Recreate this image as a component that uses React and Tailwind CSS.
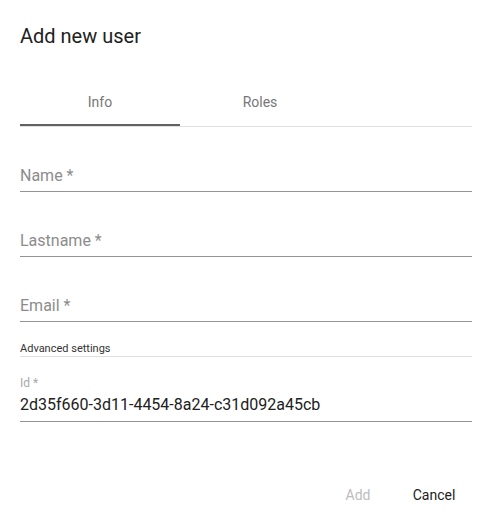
import React from "react";

function Field({ label }) {
  return (
    <div className="mt-[32px] h-[33px] pt-[2px] border-b border-[#949494] flex items-center">
      <span className="text-[16px] leading-[24px] text-[#8c8c8c]">{label}</span>
    </div>
  );
}

export default function App() {
  return (
    <div
      className="w-[491px] h-[528px] bg-white overflow-hidden"
      style={{ fontFamily: "Roboto, 'Liberation Sans', sans-serif" }}
    >
      <div className="pl-[20px] pr-[19px]">
        <h2 className="pt-[20px] text-[20px] leading-[32px] font-normal text-[#212121]">
          Add new user
        </h2>
        <div className="mt-[26px] flex border-b border-[#e0e0e0]">
          <div className="w-[160px] h-[48px] flex flex-col">
            <div className="flex-1 pt-[2px] flex items-center justify-center text-[14px] font-normal text-[#777]">
              Info
            </div>
            <div className="h-[2px] bg-[#616161]" />
          </div>
          <div className="w-[160px] h-[48px] flex items-center justify-center text-[14px] font-normal text-[#777]">
            Roles
          </div>
        </div>
        <Field label="Name *" />
        <Field label="Lastname *" />
        <Field label="Email *" />
        <div className="mt-[19px] h-[16px] border-b border-[#e0e0e0] text-[11px] leading-[15px] text-[#333]">
          Advanced settings
        </div>
        <div className="mt-[18px]">
          <div className="text-[12px] leading-[16px] text-[#a8a8a8]">Id *</div>
          <div className="mt-[2px] pb-[4px] border-b border-[#949494] text-[16px] leading-[24px] text-[#212121]">
            2d35f660-3d11-4454-8a24-c31d092a45cb
          </div>
        </div>
      </div>
      <div className="mt-[55px] flex justify-end gap-[12px] pr-[25px]">
        <button className="w-[64px] h-[36px] text-[14px] font-normal text-[#bdbdbd]">Add</button>
        <button className="w-[64px] h-[36px] text-[14px] font-normal text-[#212121]">Cancel</button>
      </div>
    </div>
  );
}
